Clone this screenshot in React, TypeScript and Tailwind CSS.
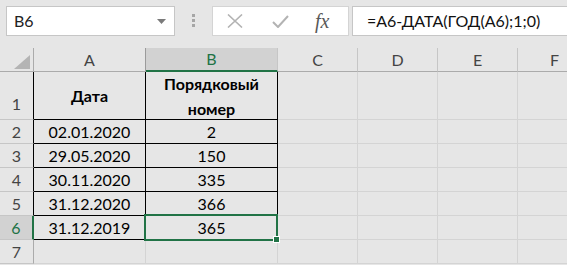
import React from 'react';

const cols = [
  { key: 'A', w: 'w-[112px]' },
  { key: 'B', w: 'w-[132px]' },
  { key: 'C', w: 'w-[80px]' },
  { key: 'D', w: 'w-[80px]' },
  { key: 'E', w: 'w-[80px]' },
];

const data = [
  ['02.01.2020', '2'],
  ['29.05.2020', '150'],
  ['30.11.2020', '335'],
  ['31.12.2020', '366'],
  ['31.12.2019', '365'],
];

const EmptyCells = () => (
  <>
    <div className="w-[80px] shrink-0 border-r border-b border-[#d4d4d4]" />
    <div className="w-[80px] shrink-0 border-r border-b border-[#d4d4d4]" />
    <div className="w-[80px] shrink-0 border-r border-b border-[#d4d4d4]" />
    <div className="flex-1 border-b border-[#d4d4d4]" />
  </>
);

export default function App() {
  return (
    <div className="w-[567px] h-[265px] overflow-hidden bg-[#e6e6e6] font-['Lato','Open_Sans',sans-serif] text-[16px] text-black">
      {/* formula bar */}
      <div className="h-[48px] flex items-start pt-[6px]">
        <div className="ml-[6px] w-[169px] h-[30px] shrink-0 bg-white border border-[#c6c6c6] flex items-center pl-[7px] pr-[8px]">
          <span className="flex-1 text-[#222]">B6</span>
          <svg width="9" height="5" viewBox="0 0 9 5">
            <polygon points="0,0 9,0 4.5,5" fill="#7a7a7a" />
          </svg>
        </div>
        <div className="ml-[17px] mt-[8px] w-[3px] flex flex-col gap-[2px] shrink-0">
          <div className="h-[3px] bg-[#a6a6a6]" />
          <div className="h-[3px] bg-[#a6a6a6]" />
          <div className="h-[3px] bg-[#a6a6a6]" />
        </div>
        <div className="ml-[17px] w-[137px] h-[30px] shrink-0 bg-white border border-[#d4d4d4] flex items-center">
          <svg className="ml-[14px]" width="16" height="14" viewBox="0 0 16 14">
            <path d="M1 0.5 L15 13.5 M15 0.5 L1 13.5" stroke="#b3b3b3" strokeWidth="1.6" fill="none" />
          </svg>
          <svg className="ml-[29px]" width="17" height="13" viewBox="0 0 17 13">
            <path d="M1 7 L6 12 L16 1" stroke="#b3b3b3" strokeWidth="2" fill="none" />
          </svg>
          <span className="ml-[26px] font-['Liberation_Serif',serif] italic text-[20px] text-[#595959] leading-none">
            fx
          </span>
        </div>
        <div className="ml-[3px] w-[240px] h-[30px] shrink-0 bg-white border border-[#c6c6c6] flex items-center pl-[14px] text-[#111]">
          =А6-ДАТА(ГОД(А6);1;0)
        </div>
      </div>

      {/* column headers */}
      <div className="flex h-[24px] text-[#444]">
        <div className="w-[34px] shrink-0 border-r border-b border-[#ababab] relative">
          <svg className="absolute left-[14px] top-[7px]" width="16" height="14" viewBox="0 0 16 14">
            <polygon points="16,0 16,14 0,14" fill="#b4b4b4" />
          </svg>
        </div>
        {cols.map((c) =>
          c.key === 'B' ? (
            <div
              key={c.key}
              className={`${c.w} shrink-0 bg-[#d2d2d2] border-r border-[#c6c6c6] border-b-2 border-b-[#217346] flex items-center justify-center text-[#217346]`}
            >
              {c.key}
            </div>
          ) : (
            <div
              key={c.key}
              className={`${c.w} shrink-0 border-r ${c.key === 'A' ? 'border-r-[#9b9b9b]' : 'border-r-[#c6c6c6]'} border-b border-b-[#ababab] flex items-center justify-center`}
            >
              {c.key}
            </div>
          )
        )}
        <div className="flex-1 border-b border-[#ababab] flex items-center pl-[32px]">F</div>
      </div>

      {/* row 1 */}
      <div className="flex h-[48px]">
        <div className="w-[34px] shrink-0 border-r border-r-black border-b border-b-[#c6c6c6] flex items-end justify-center pb-[3px] text-[#444]">
          1
        </div>
        <div className="w-[112px] shrink-0 border-r border-b border-black flex items-center justify-center font-bold">
          Дата
        </div>
        <div className="w-[132px] shrink-0 border-r border-b border-black flex items-center justify-center text-center font-bold leading-[25px]">
          Порядковый
          <br />
          номер
        </div>
        <EmptyCells />
      </div>

      {/* rows 2-6 */}
      {data.map((r, i) => {
        const sel = i === 4;
        return (
          <div key={i} className="flex h-[24px]">
            <div
              className={`w-[34px] shrink-0 border-b border-b-[#c6c6c6] flex items-center justify-center ${
                sel ? 'bg-[#d2d2d2] border-r-2 border-r-[#217346] text-[#217346]' : 'border-r border-r-black text-[#444]'
              }`}
            >
              {i + 2}
            </div>
            <div className="w-[112px] shrink-0 border-r border-b border-black flex items-center justify-center">
              {r[0]}
            </div>
            <div className="w-[132px] shrink-0 border-r border-b border-black flex items-center justify-center relative">
              {r[1]}
              {sel && (
                <>
                  <div className="absolute left-[-2px] top-[-2px] right-[-1px] bottom-[-2px] border-2 border-[#217346] z-10" />
                  <div className="absolute left-[127px] top-[20px] w-[7px] h-[7px] bg-[#217346] border border-white z-20" />
                </>
              )}
            </div>
            <EmptyCells />
          </div>
        );
      })}

      {/* row 7 */}
      <div className="flex h-[24px]">
        <div className="w-[34px] shrink-0 border-r border-b border-[#c6c6c6] border-r-[#ababab] flex items-center justify-center text-[#444]">
          7
        </div>
        <div className="w-[112px] shrink-0 border-r border-b border-[#d4d4d4]" />
        <div className="w-[132px] shrink-0 border-r border-b border-[#d4d4d4]" />
        <EmptyCells />
      </div>
    </div>
  );
}
